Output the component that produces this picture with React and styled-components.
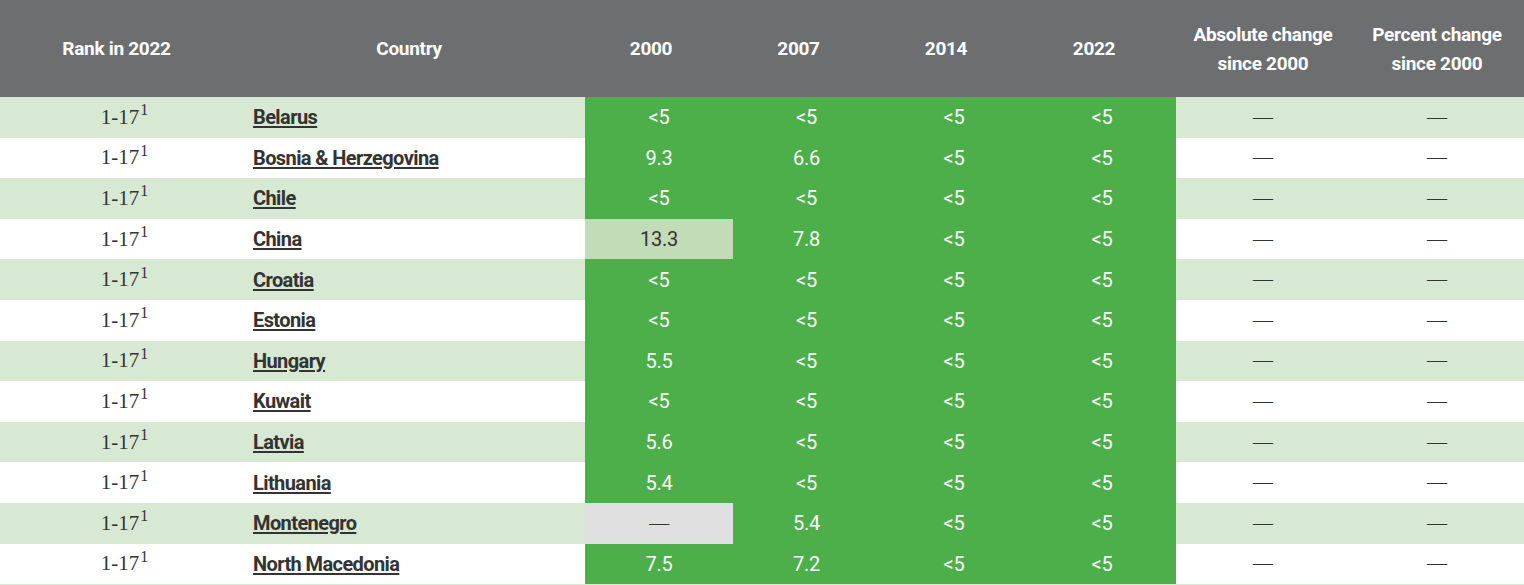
import React from 'react';
import styled, { createGlobalStyle } from 'styled-components';

const GlobalStyle = createGlobalStyle`
  body {
    margin: 0;
    background: #ffffff;
  }
`;

// 순위 / 국가 / 연도별 수치
const rows = [
  { country: 'Belarus', values: ['<5', '<5', '<5', '<5'] },
  { country: 'Bosnia & Herzegovina', values: ['9.3', '6.6', '<5', '<5'] },
  { country: 'Chile', values: ['<5', '<5', '<5', '<5'] },
  { country: 'China', values: ['13.3', '7.8', '<5', '<5'], tones: ['light'] },
  { country: 'Croatia', values: ['<5', '<5', '<5', '<5'] },
  { country: 'Estonia', values: ['<5', '<5', '<5', '<5'] },
  { country: 'Hungary', values: ['5.5', '<5', '<5', '<5'] },
  { country: 'Kuwait', values: ['<5', '<5', '<5', '<5'] },
  { country: 'Latvia', values: ['5.6', '<5', '<5', '<5'] },
  { country: 'Lithuania', values: ['5.4', '<5', '<5', '<5'] },
  { country: 'Montenegro', values: ['—', '5.4', '<5', '<5'], tones: ['gray'] },
  { country: 'North Macedonia', values: ['7.5', '7.2', '<5', '<5'] },
];

const years = ['2000', '2007', '2014', '2022'];

const App = () => {
  return (
    <>
      <GlobalStyle />
      <Table>
        <HeadRow>
          <HeadCell $shift="12px">Rank in 2022</HeadCell>
          <HeadCell $shift="12px">Country</HeadCell>
          {years.map((y) => (
            <HeadCell key={y} $shift="16px">{y}</HeadCell>
          ))}
          <HeadCell>Absolute change<br />since 2000</HeadCell>
          <HeadCell>Percent change<br />since 2000</HeadCell>
        </HeadRow>
        {rows.map((row, i) => (
          <Row key={row.country} $alt={i % 2 === 0}>
            <RankCell>
              1-17<sup>1</sup>
            </RankCell>
            <CountryCell>
              <a href="#">{row.country}</a>
            </CountryCell>
            {row.values.map((v, j) => (
              <ValueCell key={j} $tone={(row.tones && row.tones[j]) || 'green'}>
                {v === '—' ? <Dash>—</Dash> : v}
              </ValueCell>
            ))}
            <ChangeCell><Dash>—</Dash></ChangeCell>
            <ChangeCell><Dash>—</Dash></ChangeCell>
          </Row>
        ))}
      </Table>
    </>
  );
};

export default App;

const columns = '245px 340px 148px 147px 148px 148px 174px 174px';

const Table = styled.div`
  width: 1524px;
  font-family: Roboto, "Liberation Sans", sans-serif;
  border-bottom: 1px solid #d8e9d3;
`;

const HeadRow = styled.div`
  display: grid;
  grid-template-columns: ${columns};
  height: 97px;
  background-color: #6d6e70;
`;

const HeadCell = styled.div`
  display: flex;
  align-items: center;
  justify-content: center;
  text-align: center;
  color: #ffffff;
  font-weight: 700;
  font-size: 19px;
  letter-spacing: -0.3px;
  line-height: 29px;
  padding-right: ${(p) => p.$shift || '0'};
`;

const Row = styled.div`
  display: grid;
  grid-template-columns: ${columns};
  height: 40.6px;
  background-color: ${(p) => (p.$alt ? '#d8e9d3' : '#ffffff')};
`;

const RankCell = styled.div`
  display: flex;
  align-items: center;
  justify-content: center;
  padding-left: 4px;
  font-family: "Liberation Serif", "DejaVu Serif", serif;
  font-size: 21px;
  color: #333333;
  sup {
    font-size: 16px;
    line-height: 0;
    position: relative;
    top: -7px;
    vertical-align: baseline;
    margin-left: 1px;
  }
`;

const CountryCell = styled.div`
  display: flex;
  align-items: center;
  padding-left: 8px;
  a {
    color: #333333;
    font-weight: 700;
    font-size: 20px;
    letter-spacing: -0.6px;
    text-decoration: underline;
    text-underline-offset: 2px;
    text-decoration-thickness: 1.5px;
  }
`;

const toneColors = {
  green: { bg: '#4caf4a', fg: '#ffffff' },
  light: { bg: '#c3dcb8', fg: '#333333' },
  gray: { bg: '#e0e0e0', fg: '#333333' },
};

const ValueCell = styled.div`
  display: flex;
  align-items: center;
  justify-content: center;
  font-size: 20px;
  letter-spacing: -0.3px;
  background-color: ${(p) => toneColors[p.$tone].bg};
  color: ${(p) => toneColors[p.$tone].fg};
`;

const ChangeCell = styled.div`
  display: flex;
  align-items: center;
  justify-content: center;
`;

const Dash = styled.span`
  font-family: "Liberation Serif", serif;
  font-size: 20px;
  color: #333333;
`;
